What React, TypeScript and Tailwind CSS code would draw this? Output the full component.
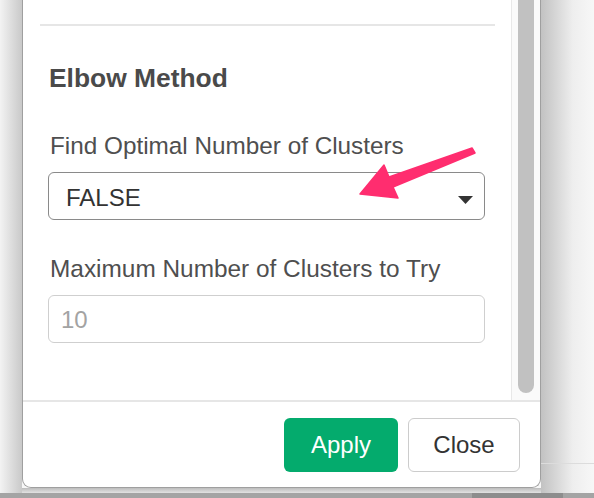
import React from "react";

export default function App() {
  return (
    <div
      className="relative w-[594px] h-[498px] overflow-hidden flex flex-col bg-[#f7f7f7]"
      style={{ fontFamily: '"Liberation Sans", Arial, sans-serif' }}
    >
      <div className="flex h-[493px]">
        {/* left backdrop shadow */}
        <div className="w-[22px] h-full bg-gradient-to-r from-[#f3f3f3] to-[#c9c9c9]" />
        {/* panel */}
        <div className="w-[519px] flex flex-col">
          <div className="h-[488px] flex flex-col bg-white border-l border-r border-b border-[#9f9f9f] rounded-b-[9px] overflow-hidden">
            <div className="flex h-[400px]">
              <div className="w-[488px] flex flex-col">
                <div className="mt-[24px] ml-[17px] w-[455px] h-[2px] bg-[#e6e6e6]" />
                <div className="pl-[25px] flex flex-col">
                  <div className="mt-[37px] ml-[1px] text-[26.4px] leading-[30px] font-bold text-[#4a4a4a]">
                    Elbow Method
                  </div>
                  <div className="mt-[39px] ml-[2px] text-[24.3px] leading-[28px] text-[#4f4f4f]">
                    Find Optimal Number of Clusters
                  </div>
                  <div className="mt-[12px] w-[437px] h-[48px] border-[1.5px] border-[#8a8a8a] rounded-[6px] flex items-start justify-between pl-[17px] pr-[11px] pt-[10.5px]">
                    <span className="text-[24px] leading-[28px] text-[#333333]">FALSE</span>
                    <svg width="15" height="8" viewBox="0 0 15 8" className="mt-[12px]">
                      <polygon points="0,0 15,0 7.5,8" fill="#333333" />
                    </svg>
                  </div>
                  <div className="mt-[35px] ml-[2px] text-[24.4px] leading-[28px] text-[#4f4f4f]">
                    Maximum Number of Clusters to Try
                  </div>
                  <div className="mt-[12px] w-[437px] h-[48px] border-[1.5px] border-[#cfcfcf] rounded-[6px] pl-[12px] pt-[9.5px]">
                    <span className="text-[24px] leading-[28px] text-[#a3a3a3]">10</span>
                  </div>
                </div>
              </div>
              {/* scrollbar track */}
              <div className="flex-1 border-l border-[#e8e8e8] bg-[#fafafa] flex justify-center">
                <div className="w-[16px] h-[393px] bg-[#c1c1c1] rounded-b-[8px]" />
              </div>
            </div>
            <div className="h-[2px] bg-[#e6e6e6]" />
            <div className="flex-1 flex items-start justify-end pt-[16px] pr-[20px] gap-[10px]">
              <button className="w-[114px] h-[54px] rounded-[6px] bg-[#04ab6d] text-white text-[24px] leading-[28px] flex items-center justify-center">
                Apply
              </button>
              <button className="w-[112px] h-[54px] rounded-[6px] border-[1.5px] border-[#cccccc] bg-white text-[#333333] text-[24px] leading-[28px] flex items-center justify-center">
                Close
              </button>
            </div>
          </div>
          <div className="flex-1 bg-gradient-to-b from-[#bdbdbd] to-[#e2e2e2]" />
        </div>
        {/* right backdrop */}
        <div className="flex-1 flex flex-col bg-gradient-to-r from-[#c2c2c2] via-[#eeeeee] via-60% to-[#f7f7f7]">
          <div className="h-[463px]" />
          <div className="h-px bg-[#dcdcdc]" />
        </div>
      </div>
      <div className="flex-1 flex bg-[#a4a4a4]">
        <div className="w-[472px]" />
        <div className="w-[91px] bg-[#8d8d8d]" />
      </div>

      {/* annotation arrow */}
      <svg className="absolute left-0 top-0 pointer-events-none" width="594" height="498">
        <polygon
          points="360,194 384,165 389,177 472,148 475,153 393,187 398,198"
          fill="#ff2d6f"
          stroke="#ff2d6f"
          strokeWidth="1.5"
          strokeLinejoin="round"
        />
      </svg>
    </div>
  );
}
